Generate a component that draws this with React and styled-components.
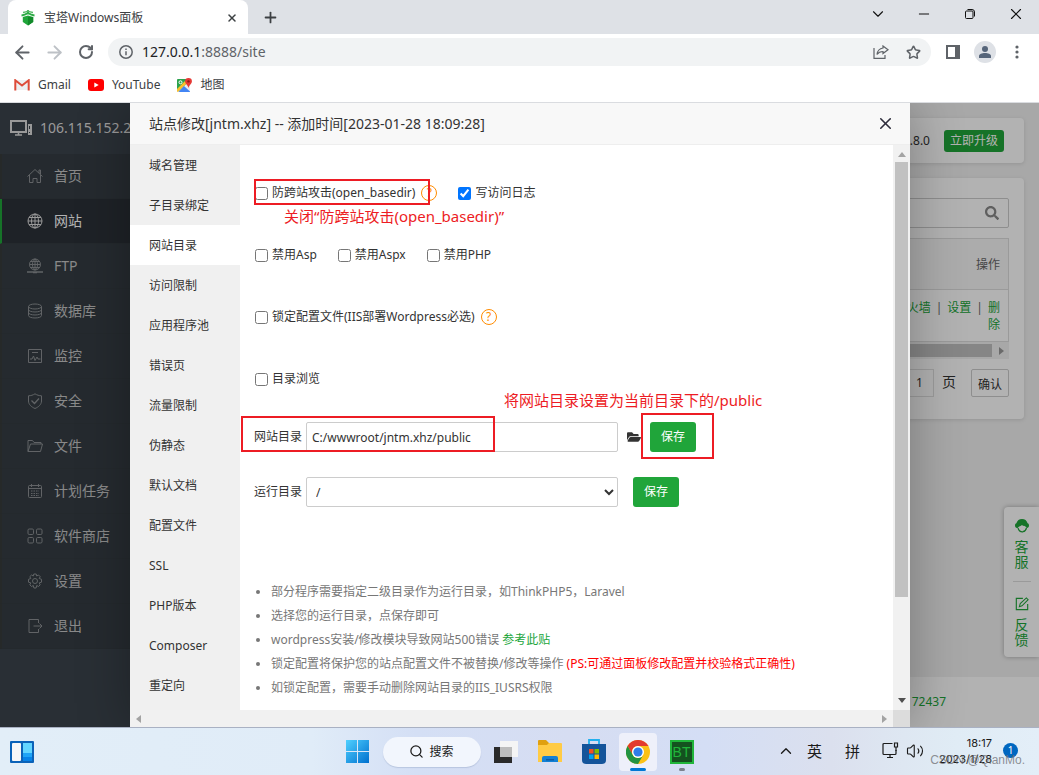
import styled, { createGlobalStyle } from 'styled-components';
import {
  ArrowLeft,
  ArrowRight,
  ChevronDown,
  ChevronUp,
  Minus,
  Plus,
  RotateCw,
  Search,
  Star,
  Volume2,
  X,
} from 'lucide-react';
import { FaFolderOpen, FaSearch } from 'react-icons/fa';

const GlobalStyle = createGlobalStyle`
  * {
    box-sizing: border-box;
  }

  body {
    margin: 0;
    font-family: "Noto Sans", "Noto Sans CJK SC", sans-serif;
    font-size: 12px;
    line-height: 16px;
    color: #333;
  }

  button, input, select {
    font: inherit;
    color: inherit;
    margin: 0;
  }

  a {
    color: inherit;
    text-decoration: none;
  }

  svg {
    display: block;
    flex: none;
  }
`;

const Screen = styled.div`
  display: flex;
  flex-direction: column;
  height: 100vh;
  overflow: hidden;
`;

/* ---------- browser ---------- */

const TabStrip = styled.div`
  display: flex;
  height: 34px;
  padding-left: 8px;
  background: #dee1e6;
`;

const Tab = styled.div`
  display: flex;
  align-items: center;
  gap: 9px;
  width: 240px;
  padding: 1px 10px 0 13px;
  border-radius: 8px 8px 0 0;
  background: #fff;
  color: #3c4043;
`;

const TabTitle = styled.span`
  flex: 1;
`;

const IconButton = styled.button`
  display: flex;
  align-items: center;
  justify-content: center;
  width: ${({ $width }) => $width || 32}px;
  height: ${({ $height }) => $height || 28}px;
  padding: 0;
  border: 0;
  background: none;
  color: ${({ $color }) => $color || '#5f6368'};
`;

const WindowControls = styled.div`
  display: flex;
  margin-left: auto;
`;

const Toolbar = styled.div`
  display: flex;
  align-items: center;
  height: 36px;
  padding: 0 6px;
  background: #fff;
`;

const AddressBar = styled.div`
  display: flex;
  flex: 1;
  align-items: center;
  height: 28px;
  margin: 0 6px;
  padding: 0 2px 0 11px;
  border-radius: 14px;
  background: #f1f3f4;
`;

const Address = styled.div`
  flex: 1;
  padding-left: 9px;
  font-size: 14px;
  line-height: 20px;
  color: #5f6368;

  strong {
    font-weight: 400;
    color: #202124;
  }
`;

const Avatar = styled.span`
  display: flex;
  align-items: center;
  justify-content: center;
  width: 22px;
  height: 22px;
  border-radius: 50%;
  background: #dee1e6;
`;

const Bookmarks = styled.nav`
  display: flex;
  align-items: center;
  gap: 17px;
  height: 33px;
  padding: 0 14px 2px;
  border-bottom: 1px solid #dadce0;
  background: #fff;
  color: #3c4043;
`;

const Bookmark = styled.a`
  display: flex;
  align-items: center;
  gap: 8px;
`;

/* ---------- panel page ---------- */

const Page = styled.div`
  position: relative;
  display: flex;
  flex: 1;
  min-height: 0;
  background: #f1f1f1;
  overflow: hidden;
`;

const Sidebar = styled.aside`
  width: 180px;
  background: #3c444d;
`;

const ServerName = styled.div`
  display: flex;
  align-items: center;
  gap: 7px;
  height: 51px;
  padding: 0 0 2px 10px;
  font-size: 14px;
  color: #dcdcdc;
`;

const MenuLink = styled.a`
  display: flex;
  align-items: center;
  gap: 11px;
  height: 45px;
  padding-left: 25px;
  border-left: 2px solid ${({ $active }) => ($active ? '#20a53a' : '#373b3b')};
  border-bottom: 1px solid #343b41;
  background: ${({ $active }) => ($active ? '#2c3138' : '#353d44')};
  font-size: 14px;
  color: ${({ $active }) => ($active ? '#fff' : '#c4c4c4')};

  svg {
    color: ${({ $active }) => ($active ? '#ddd' : '#8b8f92')};
  }
`;

const Main = styled.main`
  display: flex;
  flex: 1;
  flex-direction: column;
  min-width: 0;
`;

const Card = styled.section`
  margin: 15px 15px 0;
  border-radius: 4px;
  background: #fff;
  box-shadow: 0 1px 4px rgba(0, 0, 0, 0.12);
`;

const VersionBar = styled(Card)`
  display: flex;
  align-items: center;
  justify-content: flex-end;
  gap: 14px;
  height: 45px;
  padding-right: 20px;
`;

const UpgradeButton = styled.button`
  height: 22px;
  padding: 0 6px;
  border: 0;
  border-radius: 3px;
  background: #20a53a;
  color: #fff;
`;

const SiteCard = styled(Card)`
  padding: 20px 15px 22px;
`;

const SearchField = styled.label`
  display: flex;
  align-items: center;
  height: 30px;
  padding-right: 9px;
  border: 1px solid #ccc;
  border-radius: 2px;
  color: #888;

  input {
    flex: 1;
    border: 0;
    background: none;
  }
`;

const SiteTable = styled.table`
  width: 100%;
  margin-top: 10px;
  border: 1px solid #ddd;
  border-collapse: collapse;
  text-align: right;
  color: #666;

  th {
    height: 51px;
    padding: 2px 8px 0;
    border-bottom: 1px solid #ddd;
    background: #f6f6f6;
    font-weight: 400;
  }

  td {
    height: 52px;
    padding: 0 8px;
    line-height: 17px;
  }
`;

const Actions = styled.div`
  width: 116px;
  margin-left: auto;

  a {
    color: #20a53a;
  }

  span {
    margin: 0 5px;
  }
`;

const TableScroll = styled.div`
  display: flex;
  align-items: center;
  justify-content: space-between;
  height: 17px;
  padding-right: 5px;
  background: #f1f1f1;
  color: #999;

  i {
    width: calc(100% - 12px);
    height: 13px;
    background: #c1c1c1;
  }
`;

const Pager = styled.div`
  display: flex;
  justify-content: flex-end;
  height: 28px;
  margin-top: 10px;
  font-size: 14px;
  line-height: 26px;

  input {
    width: 50px;
    margin-right: 8px;
    padding: 0 10px;
    border: 1px solid #e0e0e0;
    font-size: 12px;
    text-align: right;
  }

  button {
    margin-left: 15px;
    padding: 2px 6px 0;
    border: 1px solid #ccc;
    border-radius: 2px;
    background: #fff;
    font-size: 12px;
  }
`;

const Footer = styled.footer`
  height: 50px;
  margin-top: auto;
  padding-right: 93px;
  background: #fff;
  line-height: 50px;
  text-align: right;
  color: #20a53a;
`;

const ServiceBox = styled.div`
  position: absolute;
  right: 0;
  top: 404px;
  display: flex;
  flex-direction: column;
  align-items: center;
  width: 35px;
  height: 150px;
  padding-top: 12px;
  border-radius: 4px 0 0 4px;
  background: #fff;
  box-shadow: 0 0 5px rgba(0, 0, 0, 0.3);
`;

const ServiceLink = styled.a`
  display: flex;
  flex-direction: column;
  align-items: center;
  gap: 6px;
  width: 18px;
  font-size: 14px;
  line-height: 15px;
  text-align: center;
  color: #20a53a;

  & + & {
    margin-top: 12px;
    padding-top: 15px;
    border-top: 1px solid #ddd;
  }

  span {
    width: 14px;
  }
`;

/* ---------- dialog ---------- */

const Overlay = styled.div`
  position: absolute;
  inset: 0;
  display: flex;
  justify-content: center;
  padding-left: 1px;
  background: rgba(0, 0, 0, 0.3);
`;

const Dialog = styled.section`
  display: flex;
  flex-direction: column;
  width: 780px;
  max-width: 100%;
  background: #fff;
  box-shadow: 1px 1px 50px rgba(0, 0, 0, 0.3);
`;

const DialogHeader = styled.header`
  display: flex;
  align-items: center;
  justify-content: space-between;
  height: 42px;
  padding: 0 9px 0 19px;
  border-bottom: 1px solid #eee;
  background: #f8f8f8;

  h1 {
    margin: 0;
    font-size: 14px;
    font-weight: 400;
  }
`;

const DialogBody = styled.div`
  display: grid;
  flex: 1;
  grid-template-columns: 110px 1fr 17px;
  grid-template-rows: 1fr 17px;
  min-height: 0;
`;

const TabList = styled.nav`
  background: #f0f0f0;
  overflow: hidden;
`;

const TabLink = styled.a`
  display: block;
  height: 40px;
  padding-left: 19px;
  background: ${({ $active }) => ($active ? '#fff' : 'none')};
  line-height: 42px;
`;

const VerticalScroll = styled.div`
  display: flex;
  flex-direction: column;
  align-items: center;
  justify-content: space-between;
  padding: 7px 0;
  background: #f1f1f1;
  color: #a3a3a3;

  i {
    width: 13px;
    height: 79%;
    margin-bottom: auto;
    margin-top: 5px;
    background: #c1c1c1;
  }

  svg:last-child {
    color: #505050;
  }
`;

const HorizontalScroll = styled.div`
  display: flex;
  grid-column: 1 / 3;
  align-items: center;
  justify-content: space-between;
  padding: 0 6px;
  background: #f1f1f1;
  color: #a3a3a3;
`;

const ScrollCorner = styled.div`
  background: #dcdcdc;
`;

const SettingsForm = styled.form`
  position: relative;
  padding: 38px 14px 0;
  overflow: hidden;
`;

const CheckRow = styled.div`
  display: flex;
  align-items: center;
  gap: 21px;
  height: 20px;
  margin-bottom: ${({ $last }) => ($last ? 33 : 42)}px;
  padding-left: 1px;
`;

const CheckGroup = styled.div`
  display: flex;
  align-items: center;
  gap: 6px;
`;

const CheckLabel = styled.label`
  display: flex;
  align-items: center;
  gap: 4px;
  line-height: 20px;

  input {
    width: 13px;
    height: 13px;
  }
`;

const HelpLink = styled.a`
  width: 16px;
  height: 16px;
  border: 1px solid #ff8c00;
  border-radius: 50%;
  font-size: 12px;
  line-height: 14px;
  text-align: center;
  color: #ff8c00;
`;

const FieldRow = styled.div`
  display: flex;
  align-items: center;
  gap: ${({ $gap }) => $gap}px;
  height: 30px;
  margin-bottom: 25px;
`;

const Field = styled.label`
  display: flex;
  flex: 0 1 364px;
  align-items: center;
  gap: 4px;
  white-space: nowrap;

  input, select {
    flex: 1;
    min-width: 0;
    height: 30px;
    padding: 0 5px;
    border: 1px solid #ccc;
    border-radius: 2px;
    background: #fff;
  }
`;

const SaveButton = styled.button`
  width: 46px;
  height: 30px;
  padding: 0;
  border: 0;
  border-radius: 3px;
  background: #20a53a;
  color: #fff;
`;

const Notes = styled.ul`
  margin: 73px 0 0;
  padding-left: 17px;
  line-height: 24px;
  color: #777;

  a {
    color: #20a53a;
  }

  em {
    font-style: normal;
    color: red;
  }
`;

const Mark = styled.div`
  position: absolute;
  top: ${({ $top }) => $top}px;
  left: ${({ $left }) => $left}px;
  width: ${({ $width }) => $width}px;
  height: ${({ $height }) => $height}px;
  border: 2px solid #ed1c24;
  pointer-events: none;
`;

const MarkText = styled.p`
  position: absolute;
  top: ${({ $top }) => $top}px;
  left: ${({ $left }) => $left}px;
  margin: 0;
  font-size: 15px;
  line-height: 20px;
  white-space: nowrap;
  color: #ed1c24;
`;

/* ---------- taskbar ---------- */

const Taskbar = styled.footer`
  position: relative;
  display: grid;
  grid-template-columns: 1fr auto 1fr;
  align-items: center;
  height: 48px;
  border-top: 1px solid #a9b1c3;
  background: linear-gradient(90deg, #e2eef8 0%, #e0ecf8 30%, #d4dff5 40%, #d6ddf2 55%, #d4def5 68%, #dbe0ee 80%, #e0ecf5 92%, #e3eef8 100%);
  color: #1b1b1b;
`;

const Widgets = styled.div`
  padding-left: 3px;
`;

const Apps = styled.div`
  display: flex;
  align-items: center;
  gap: 6px;
`;

const AppButton = styled.button`
  display: flex;
  align-items: center;
  justify-content: center;
  width: 38px;
  height: 38px;
  padding: 0;
  border: 0;
  border-radius: 4px;
  background: ${({ $active }) => ($active ? '#eef0fa' : 'none')};
  position: relative;

  &::after {
    content: '';
    position: absolute;
    bottom: 0;
    width: ${({ $bar }) => $bar || 0}px;
    height: 3px;
    border-radius: 2px;
    background: ${({ $active }) => ($active ? '#0078d4' : '#7c808c')};
  }
`;

const SearchPill = styled.button`
  display: flex;
  align-items: center;
  justify-content: center;
  gap: 5px;
  width: 98px;
  height: 30px;
  border: 0;
  border-radius: 15px;
  background: #f2f6fd;
  box-shadow: 0 1px 1px rgba(100, 120, 160, 0.25);
`;

const Tray = styled.div`
  display: flex;
  align-items: center;
  justify-content: flex-end;
  padding: 0 21px 2px 0;
  font-size: 15px;
`;

const TrayItem = styled.span`
  margin-right: ${({ $gap }) => $gap}px;
`;

const Clock = styled.time`
  width: 68px;
  margin-right: 11px;
  font-family: Inter, "Noto Sans", sans-serif;
  font-size: 11px;
  line-height: 16px;
  text-align: right;
`;

const Badge = styled.span`
  width: 15px;
  height: 15px;
  border-radius: 50%;
  background: #0067c0;
  font-size: 10px;
  line-height: 15px;
  text-align: center;
  color: #fff;
`;

const Watermark = styled.span`
  position: absolute;
  right: 14px;
  bottom: 7px;
  font-family: "Liberation Sans", sans-serif;
  font-size: 12px;
  color: rgba(110, 110, 115, 0.75);
`;

/* ---------- drawings ---------- */

const LineIcon = ({ size = 16, children }) => (
  <svg width={size} height={size} viewBox="0 0 16 16" fill="none" stroke="currentColor" strokeWidth="1" aria-hidden="true">
    {children}
  </svg>
);

const Triangle = ({ points, width, height }) => (
  <svg width={width} height={height} viewBox={`0 0 ${width} ${height}`} fill="currentColor" aria-hidden="true">
    <polygon points={points} />
  </svg>
);

const PagodaIcon = () => (
  <svg width="14" height="16" viewBox="0 0 14 16" aria-hidden="true">
    <path d="M7 0v4" stroke="#20a53a" strokeWidth="1.500" />
    <path d="M2 2.500C4 2.200 5.500 1.800 7 1c1.500.8 3 1.200 5 1.500" fill="none" stroke="#58b868" strokeWidth="1.300" />
    <path d="M.5 5.500C3 5.200 5 4.300 7 3c2 1.300 4 2.200 6.500 2.500" fill="none" stroke="#2bab44" strokeWidth="1.800" />
    <path d="M1.800 7 7 5.500 12.200 7v5L7 15.500 1.800 12z" fill="#20a53a" />
    <path d="M7 7v8.500l5.200-3.500V7z" fill="#128a2a" />
  </svg>
);

const GmailIcon = () => (
  <svg width="16" height="12" viewBox="0 0 16 12" aria-hidden="true">
    <path d="M1 1h14v10H1z" fill="#eceff1" />
    <path d="M1.300 11.500V1.300L8 6.500l6.700-5.200v10.200" fill="none" stroke="#dd4b39" strokeWidth="2" />
  </svg>
);

const YoutubeIcon = () => (
  <svg width="16" height="12" viewBox="0 0 16 12" aria-hidden="true">
    <rect width="16" height="12" rx="3" fill="#f00" />
    <path d="M6.300 3.400v5.200L10.700 6z" fill="#fff" />
  </svg>
);

const MapsIcon = () => (
  <svg width="15" height="15" viewBox="0 0 15 15" aria-hidden="true">
    <rect y="1" width="13" height="13" rx="1" fill="#e8eaed" />
    <path d="M0 2a1 1 0 0 1 1-1h8v5L2 13l-2-1z" fill="#2ba24c" />
    <path d="M0 11 8 3l2 2-9 9a1 1 0 0 1-1-1z" fill="#fbc02d" />
    <path d="M7 8l6 5.500v.5H1.500z" fill="#4285f4" />
    <circle cx="3.500" cy="4.300" r="1.500" fill="none" stroke="#fff" />
    <path d="M11.500 0a3.400 3.400 0 0 1 3.400 3.500c0 2.500-2.800 3.200-3.400 6.500-.6-3.300-3.400-4-3.400-6.500A3.400 3.400 0 0 1 11.500 0z" fill="#e53935" />
    <circle cx="11.500" cy="3.400" r="1.200" fill="#8e1b16" />
  </svg>
);

const ServerIcon = () => (
  <svg width="23" height="16" viewBox="0 0 23 16" fill="none" stroke="currentColor" aria-hidden="true">
    <rect x="1" y="1" width="15" height="11" strokeWidth="2" />
    <path d="M5 15h7M8.500 12v3" strokeWidth="1.500" />
    <path d="M18 4h4v11h-4z" fill="currentColor" stroke="none" />
    <path d="M19.500 6v3M19 12.500h1" stroke="#3c444d" />
  </svg>
);

const HeadsetIcon = () => (
  <svg width="14" height="14" viewBox="0 0 14 14" fill="currentColor" aria-hidden="true">
    <path d="M7 0a6 6 0 0 0-5.600 4.200C.5 4.500 0 5.300 0 6.500 0 8 .8 9 2 9h.7C3 7.800 5 7.500 7 6c1.500 1.200 4 .8 4.600 3h.4c1.200 0 2-1 2-2.500 0-1.200-.5-2-1.400-2.300A6 6 0 0 0 7 0z" />
    <path d="M3 9c.8 3 3 4 5 3.800M11.500 9c-.5 2-1.500 3.300-3.500 3.700" fill="none" stroke="currentColor" strokeWidth="1.200" />
  </svg>
);

const EditIcon = () => (
  <LineIcon size={14}>
    <path d="M9 1.500H1.500v13h13V8" strokeWidth="1.300" />
    <path d="M5 11l1-3.500 7-6.500L15 3 8 10z" strokeWidth="1.200" />
  </LineIcon>
);

const menuIcons = {
  home: (
    <LineIcon>
      <path d="M.5 8.500 8 1.500l7.500 7M2.500 7v7.500H6v-4h4v4h3.500V7M12 5V2h1.500v4" />
    </LineIcon>
  ),
  site: (
    <LineIcon>
      <circle cx="8" cy="8" r="7" />
      <ellipse cx="8" cy="8" rx="3.500" ry="7" />
      <path d="M1 8h14M8 1v14M2 4.500h12M2 11.500h12" />
    </LineIcon>
  ),
  ftp: (
    <LineIcon>
      <circle cx="8" cy="6.500" r="5.500" />
      <ellipse cx="8" cy="6.500" rx="2.500" ry="5.500" />
      <path d="M2.500 6.500h11M8 1v11M3.500 3.500h9M3.500 9.500h9" />
      <path d="M0 14h16M6 14.500h4" strokeWidth="1.500" />
    </LineIcon>
  ),
  database: (
    <LineIcon>
      <ellipse cx="8" cy="3.500" rx="6.500" ry="2.500" />
      <path d="M1.500 3.500v9c0 3.300 13 3.300 13 0v-9M1.500 6.500c0 3.300 13 3.300 13 0M1.500 9.500c0 3.300 13 3.300 13 0" />
    </LineIcon>
  ),
  monitor: (
    <LineIcon>
      <path d="M1.500 1.500h13v13h-13z" />
      <path d="M5 4.500h6M3 11h2l1.500-3L8 12.500 10 9l1 2h2.500" />
    </LineIcon>
  ),
  security: (
    <LineIcon>
      <path d="M8 .8c2 1.300 4 1.900 6.500 2V8c0 3.500-3 6-6.500 7.500C4.500 14 1.500 11.500 1.500 8V2.800c2.500-.1 4.500-.7 6.500-2z" />
      <path d="m4.500 7.500 3 3 4.500-5" strokeWidth="1.300" />
    </LineIcon>
  ),
  files: (
    <LineIcon>
      <path d="M1 13.500v-11h4.500l1.500 2h7V6M1 13.500 3.500 6h12l-2 7.500z" />
    </LineIcon>
  ),
  cron: (
    <LineIcon>
      <rect x="1.500" y="2.500" width="13" height="12" rx="1" />
      <path d="M4.500 1v3M11.500 1v3M1.500 5.500h13" />
      <path d="M4 8h8M4 10.500h8M4 12.500h8" strokeDasharray="1.500 1" />
    </LineIcon>
  ),
  store: (
    <LineIcon>
      <rect x="1" y="1" width="5.500" height="5.500" rx="1.200" />
      <rect x="9.500" y="1" width="5.500" height="5.500" rx="1.200" />
      <rect x="1" y="9.500" width="5.500" height="5.500" rx="1.200" />
      <rect x="9.500" y="9.500" width="5.500" height="5.500" rx="1.200" />
    </LineIcon>
  ),
  settings: (
    <LineIcon>
      <circle cx="8" cy="8" r="2.500" />
      <path d="M6.800 1h2.400l.5 2 1.800-1 1.700 1.700-1 1.800 2.300.8v2.900l-2.300.7 1 1.900-1.700 1.700-1.800-1-.6 2.500H6.900l-.6-2.500-1.800 1-1.700-1.700 1-1.900L1.500 9.200V6.300l2.300-.8-1-1.800L4.500 2l1.800 1z" />
    </LineIcon>
  ),
  logout: (
    <LineIcon>
      <path d="M11.500 5V1.500H2v13h9.500V11M6.500 8h8.500M12.500 5.500 15 8l-2.500 2.500" />
    </LineIcon>
  ),
};

const WidgetsIcon = () => (
  <svg width="24" height="22" viewBox="0 0 24 22" aria-hidden="true">
    <rect width="24" height="22" rx="1" fill="#0b62b8" />
    <rect x="2" y="2" width="9" height="18" rx="1" fill="#f7f7f7" />
    <path d="M13 2h9v10h-9z" fill="#62d5ff" />
    <path d="M13 12h9v4h-9z" fill="#1ea4f7" />
    <path d="M13 16h9v4h-9z" fill="#0683e8" />
  </svg>
);

const StartIcon = () => (
  <svg width="23" height="23" viewBox="0 0 23 23" aria-hidden="true">
    <defs>
      <linearGradient id="start" x2="1" y2="1" gradientUnits="objectBoundingBox">
        <stop stopColor="#4fd0ff" />
        <stop offset="1" stopColor="#0070ce" />
      </linearGradient>
    </defs>
    <path d="M0 0h11v11H0zM12 0h11v11H12zM0 12h11v11H0zM12 12h11v11H12z" fill="url(#start)" />
  </svg>
);

const TaskViewIcon = () => (
  <svg width="24" height="22" viewBox="0 0 24 22" aria-hidden="true">
    <path d="M0 6h18v16H0z" fill="#2a2a2a" />
    <path d="M6 0h18v16H6z" fill="#f5f5f5" />
    <path d="M6 6h12v10H6z" fill="#bdbdbd" />
  </svg>
);

const ExplorerIcon = () => (
  <svg width="24" height="23" viewBox="0 0 24 23" aria-hidden="true">
    <path d="M0 1a1 1 0 0 1 1-1h7l3 3h12v5H0z" fill="#e0a010" />
    <path d="M0 5h9l2-2h12a1 1 0 0 1 1 1v18H0z" fill="#ffcb45" />
    <path d="M4 22v-4a2 2 0 0 1 2-2h12a2 2 0 0 1 2 2v4z" fill="#1380d4" />
    <path d="M8 19h8v1.500H8z" fill="#0a5ba6" />
  </svg>
);

const StoreIcon = () => (
  <svg width="24" height="25" viewBox="0 0 24 25" aria-hidden="true">
    <path d="M7 6V1h10v5" fill="none" stroke="#23b0ee" strokeWidth="1.800" />
    <path d="M0 5h24v16a4 4 0 0 1-4 4H4a4 4 0 0 1-4-4z" fill="#14549a" />
    <path d="M7 10h4.500v4.500H7z" fill="#f25022" />
    <path d="M12.500 10H17v4.500h-4.500z" fill="#7fba00" />
    <path d="M7 15.500h4.500V20H7z" fill="#00a4ef" />
    <path d="M12.500 15.500H17V20h-4.500z" fill="#ffb900" />
  </svg>
);

const ChromeIcon = () => (
  <svg width="24" height="24" viewBox="0 0 24 24" aria-hidden="true">
    <circle cx="12" cy="12" r="12" fill="#fbc116" />
    <path d="M1.600 6A12 12 0 0 1 22.400 6H12a6 6 0 0 0-5.200 9z" fill="#e33b2e" />
    <path d="M1.600 6A12 12 0 0 0 12 24l5.200-9A6 6 0 0 1 6.800 15z" fill="#229342" />
    <circle cx="12" cy="12" r="6" fill="#fff" />
    <circle cx="12" cy="12" r="4.600" fill="#2f7de9" />
  </svg>
);

const BtIcon = styled.span`
  width: 24px;
  height: 24px;
  border: 2px solid #20b53a;
  background: #14521f;
  font-family: "Liberation Sans", sans-serif;
  font-size: 14px;
  line-height: 21px;
  text-align: center;
  color: #20b53a;
`;

/* ---------- data ---------- */

const menu = [
  { icon: 'home', label: '首页' },
  { icon: 'site', label: '网站', active: true },
  { icon: 'ftp', label: 'FTP' },
  { icon: 'database', label: '数据库' },
  { icon: 'monitor', label: '监控' },
  { icon: 'security', label: '安全' },
  { icon: 'files', label: '文件' },
  { icon: 'cron', label: '计划任务' },
  { icon: 'store', label: '软件商店' },
  { icon: 'settings', label: '设置' },
  { icon: 'logout', label: '退出' },
];

const siteTabs = [
  '域名管理', '子目录绑定', '网站目录', '访问限制', '应用程序池', '错误页', '流量限制',
  '伪静态', '默认文档', '配置文件', 'SSL', 'PHP版本', 'Composer', '重定向',
];

const Check = ({ label, checked }) => (
  <CheckLabel>
    <input type="checkbox" defaultChecked={checked} />
    {label}
  </CheckLabel>
);

const Browser = () => (
  <header>
    <TabStrip>
      <Tab>
        <PagodaIcon />
        <TabTitle>宝塔Windows面板</TabTitle>
        <IconButton $width={12} $color="#3c4043" aria-label="关闭标签页"><X size={12} strokeWidth={3} /></IconButton>
      </Tab>
      <IconButton $width={44} $height={34} $color="#3c4043" aria-label="新标签页"><Plus size={17} strokeWidth={2.500} /></IconButton>
      <WindowControls>
        <IconButton $width={46} $color="#111" aria-label="搜索标签页"><ChevronDown size={18} strokeWidth={1.500} /></IconButton>
        <IconButton $width={46} $color="#111" aria-label="最小化"><Minus size={16} strokeWidth={1.500} /></IconButton>
        <IconButton $width={46} $color="#111" aria-label="还原">
          <svg width="10" height="10" viewBox="0 0 10 10" fill="none" stroke="currentColor">
            <rect x=".5" y="2" width="7.500" height="7.500" rx="1" />
            <path d="M2.500.5H7A2.500 2.500 0 0 1 9.500 3v4.500" />
          </svg>
        </IconButton>
        <IconButton $width={46} $color="#111" aria-label="关闭"><X size={18} strokeWidth={1.500} /></IconButton>
      </WindowControls>
    </TabStrip>

    <Toolbar>
      <IconButton aria-label="后退"><ArrowLeft size={21} strokeWidth={2.200} /></IconButton>
      <IconButton $color="#bdc1c6" aria-label="前进"><ArrowRight size={21} strokeWidth={2.200} /></IconButton>
      <IconButton aria-label="刷新"><RotateCw size={16} strokeWidth={3} /></IconButton>
      <AddressBar>
        <svg width="14" height="14" viewBox="0 0 14 14" fill="none" stroke="#5f6368" strokeWidth="1.500" aria-hidden="true">
          <circle cx="7" cy="7" r="6.200" />
          <path d="M7 6.300v4M7 3.500v1.500" />
        </svg>
        <Address role="textbox" aria-label="地址" tabIndex={0}><strong>127.0.0.1</strong>:8888/site</Address>
        <IconButton aria-label="分享">
          <svg width="16" height="14" viewBox="0 0 16 14" fill="none" stroke="currentColor" strokeWidth="1.200">
            <path d="M1 3v10.300h11V10" />
            <path d="M10 1l5 3.800-5 3.700V6.500c-3 0-4.500.8-6 3C4.500 5.500 6.500 3.500 10 3z" />
          </svg>
        </IconButton>
        <IconButton aria-label="收藏"><Star size={15} strokeWidth={2.400} /></IconButton>
      </AddressBar>
      <IconButton aria-label="侧边栏">
        <svg width="14" height="14" viewBox="0 0 14 14">
          <path d="M0 0h14v14H0zM2 2v10h7V2z" fill="currentColor" fillRule="evenodd" />
        </svg>
      </IconButton>
      <IconButton aria-label="用户">
        <Avatar>
          <svg width="12" height="12" viewBox="0 0 12 12" fill="#56657a">
            <circle cx="6" cy="3" r="3" />
            <path d="M0 12v-2c0-2 3-3 6-3s6 1 6 3v2z" />
          </svg>
        </Avatar>
      </IconButton>
      <IconButton aria-label="菜单">
        <svg width="4" height="14" viewBox="0 0 4 14" fill="currentColor">
          <circle cx="2" cy="2" r="1.600" />
          <circle cx="2" cy="7" r="1.600" />
          <circle cx="2" cy="12" r="1.600" />
        </svg>
      </IconButton>
    </Toolbar>

    <Bookmarks>
      <Bookmark href="#gmail"><GmailIcon />Gmail</Bookmark>
      <Bookmark href="#youtube"><YoutubeIcon />YouTube</Bookmark>
      <Bookmark href="#maps"><MapsIcon />地图</Bookmark>
    </Bookmarks>
  </header>
);

const SiteDialog = () => (
  <Overlay>
    <Dialog role="dialog" aria-labelledby="dialog-title">
      <DialogHeader>
        <h1 id="dialog-title">站点修改[jntm.xhz] -- 添加时间[2023-01-28 18:09:28]</h1>
        <IconButton $color="#2d2c3b" aria-label="关闭"><X size={19} strokeWidth={2} /></IconButton>
      </DialogHeader>
      <DialogBody>
        <TabList>
          {siteTabs.map((tab) => (
            <TabLink key={tab} href="#site" $active={tab === '网站目录'}>{tab}</TabLink>
          ))}
        </TabList>

        <SettingsForm>
          <CheckRow>
            <CheckGroup>
              <Check label="防跨站攻击(open_basedir)" />
              <HelpLink href="#help">?</HelpLink>
            </CheckGroup>
            <Check label="写访问日志" checked />
          </CheckRow>
          <CheckRow>
            <Check label="禁用Asp" />
            <Check label="禁用Aspx" />
            <Check label="禁用PHP" />
          </CheckRow>
          <CheckRow>
            <CheckGroup>
              <Check label="锁定配置文件(IIS部署Wordpress必选)" />
              <HelpLink href="#help">?</HelpLink>
            </CheckGroup>
          </CheckRow>
          <CheckRow $last>
            <Check label="目录浏览" />
          </CheckRow>

          <FieldRow $gap={9}>
            <Field>
              网站目录
              <input type="text" defaultValue="C:/wwwroot/jntm.xhz/public" />
            </Field>
            <FaFolderOpen size={14} />
            <SaveButton type="button">保存</SaveButton>
          </FieldRow>
          <FieldRow $gap={15}>
            <Field>
              运行目录
              <select defaultValue="/">
                <option>/</option>
              </select>
            </Field>
            <SaveButton type="button">保存</SaveButton>
          </FieldRow>

          <Notes>
            <li>部分程序需要指定二级目录作为运行目录，如ThinkPHP5，Laravel</li>
            <li>选择您的运行目录，点保存即可</li>
            <li>wordpress安装/修改模块导致网站500错误 <a href="#post">参考此贴</a></li>
            <li>锁定配置将保护您的站点配置文件不被替换/修改等操作 <em>(PS:可通过面板修改配置并校验格式正确性)</em></li>
            <li>如锁定配置，需要手动删除网站目录的IIS_IUSRS权限</li>
          </Notes>

          <Mark $top={34} $left={14} $width={176} $height={26} />
          <MarkText $top={61} $left={44}>关闭“防跨站攻击(open_basedir)”</MarkText>
          <MarkText $top={245} $left={264}>将网站目录设置为当前目录下的/public</MarkText>
          <Mark $top={271} $left={1} $width={254} $height={36} />
          <Mark $top={268} $left={401} $width={73} $height={46} />
        </SettingsForm>

        <VerticalScroll>
          <Triangle width={8} height={5} points="0,5 4,0 8,5" />
          <i />
          <Triangle width={8} height={5} points="0,0 8,0 4,5" />
        </VerticalScroll>
        <HorizontalScroll>
          <Triangle width={5} height={8} points="5,0 0,4 5,8" />
          <Triangle width={5} height={8} points="0,0 5,4 0,8" />
        </HorizontalScroll>
        <ScrollCorner />
      </DialogBody>
    </Dialog>
  </Overlay>
);

const Panel = () => (
  <Page>
    <Sidebar>
      <ServerName><ServerIcon />106.115.152.2</ServerName>
      <nav>
        {menu.map(({ icon, label, active }) => (
          <MenuLink key={icon} href={`#${icon}`} $active={active}>
            {menuIcons[icon]}
            {label}
          </MenuLink>
        ))}
      </nav>
    </Sidebar>

    <Main>
      <VersionBar>
        <span>7.8.0</span>
        <UpgradeButton>立即升级</UpgradeButton>
      </VersionBar>
      <SiteCard>
        <SearchField>
          <input type="text" aria-label="搜索网站" />
          <FaSearch size={14} />
        </SearchField>
        <SiteTable>
          <thead>
            <tr><th>操作</th></tr>
          </thead>
          <tbody>
            <tr>
              <td>
                <Actions>
                  <a href="#firewall">防火墙</a>
                  <span>|</span>
                  <a href="#edit">设置</a>
                  <span>|</span>
                  <a href="#delete">删除</a>
                </Actions>
              </td>
            </tr>
          </tbody>
        </SiteTable>
        <TableScroll>
          <i />
          <Triangle width={5} height={8} points="0,0 5,4 0,8" />
        </TableScroll>
        <Pager>
          <input type="text" defaultValue="1" aria-label="页码" />
          页
          <button type="button">确认</button>
        </Pager>
      </SiteCard>
      <Footer>72437</Footer>
    </Main>

    <ServiceBox>
      <ServiceLink href="#service"><HeadsetIcon /><span>客服</span></ServiceLink>
      <ServiceLink href="#feedback"><EditIcon /><span>反馈</span></ServiceLink>
    </ServiceBox>

    <SiteDialog />
  </Page>
);

const WindowsTaskbar = () => (
  <Taskbar>
    <Widgets>
      <AppButton aria-label="小组件"><WidgetsIcon /></AppButton>
    </Widgets>
    <Apps>
      <AppButton aria-label="开始"><StartIcon /></AppButton>
      <SearchPill><Search size={15} strokeWidth={2} />搜索</SearchPill>
      <AppButton aria-label="任务视图"><TaskViewIcon /></AppButton>
      <AppButton aria-label="文件资源管理器"><ExplorerIcon /></AppButton>
      <AppButton aria-label="应用商店"><StoreIcon /></AppButton>
      <AppButton aria-label="Chrome" $active $bar={16}><ChromeIcon /></AppButton>
      <AppButton $bar={6}><BtIcon>BT</BtIcon></AppButton>
    </Apps>
    <Tray>
      <TrayItem $gap={12}><ChevronUp size={18} strokeWidth={1.800} /></TrayItem>
      <TrayItem $gap={23}>英</TrayItem>
      <TrayItem $gap={22}>拼</TrayItem>
      <TrayItem $gap={7}>
        <svg width="17" height="17" viewBox="0 0 17 17" fill="none" stroke="currentColor" strokeWidth="1.200" aria-hidden="true">
          <path d="M10.500 1.500H2a1 1 0 0 0-1 1v9a1 1 0 0 0 1 1h11a1 1 0 0 0 1-1V8M5 15.500h6M8 12.500v3" />
          <path d="M12.500 1h3v4h-3zM14 5v4" />
        </svg>
      </TrayItem>
      <Volume2 size={18} strokeWidth={1.500} />
      <Clock>18:17<br />2023/1/28</Clock>
      <Badge>1</Badge>
    </Tray>
    <Watermark>CSDN @QianMo.</Watermark>
  </Taskbar>
);

const App = () => (
  <Screen>
    <GlobalStyle />
    <Browser />
    <Panel />
    <WindowsTaskbar />
  </Screen>
);

export default App;
